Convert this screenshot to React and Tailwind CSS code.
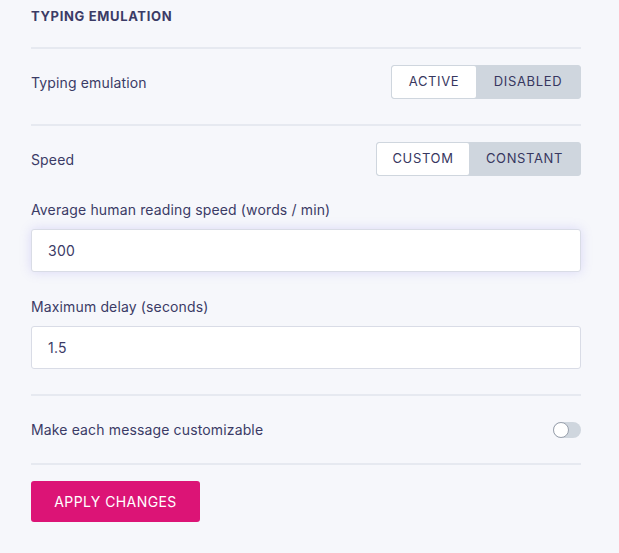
import { useState } from 'react';

function Segmented({ options, value, onChange, widths }) {
  return (
    <div className="flex h-[34px] rounded-[3px] border border-[#cfd6de] bg-[#cfd6de] overflow-hidden">
      {options.map((opt, i) => (
        <button
          key={opt}
          onClick={() => onChange(opt)}
          className={`${widths[i]} h-full text-[13px] tracking-[0.05em] text-[#37375f] ${
            value === opt ? 'bg-white rounded-[2px]' : 'bg-[#cfd6de]'
          }`}
        >
          {opt}
        </button>
      ))}
    </div>
  );
}

export default function App() {
  const [typing, setTyping] = useState('ACTIVE');
  const [speed, setSpeed] = useState('CUSTOM');
  const [wpm, setWpm] = useState('300');
  const [delay, setDelay] = useState('1.5');
  const [custom, setCustom] = useState(false);

  return (
    <div className="min-h-screen bg-[#f6f7fb] text-[#3b3b66] font-['Inter',sans-serif]">
      <div className="w-[550px] ml-[31px]">
        {/* HEADER */}
        <h2 className="pt-[8px] h-[47px] text-[13px] font-bold uppercase leading-4 tracking-[0.05em] text-[#3b3b66]">
          Typing emulation
        </h2>
        <div className="h-[2px] bg-[#e6e9f0]" />

        {/* TYPING EMULATION */}
        <div className="flex items-center justify-between pt-4 pb-[25px]">
          <span className="text-[14px] tracking-[0.01em]">Typing emulation</span>
          <Segmented
            options={['ACTIVE', 'DISABLED']}
            value={typing}
            onChange={setTyping}
            widths={['w-[84px]', 'w-[104px]']}
          />
        </div>
        <div className="h-[2px] bg-[#e6e9f0]" />

        {/* SPEED */}
        <div className="flex items-center justify-between pt-4">
          <span className="text-[14px] tracking-[0.01em]">Speed</span>
          <Segmented
            options={['CUSTOM', 'CONSTANT']}
            value={speed}
            onChange={setSpeed}
            widths={['w-[92px]', 'w-[111px]']}
          />
        </div>

        <label className="block mt-[26px] text-[14px] tracking-[0.01em] leading-4">
          Average human reading speed (words / min)
        </label>
        <input
          value={wpm}
          onChange={(e) => setWpm(e.target.value)}
          className="mt-[11px] w-full h-[43px] px-4 text-[14px] tracking-[0.02em] bg-white rounded-[3px] border border-[#d9dce6] shadow-[0_0_12px_rgba(120,110,230,0.22)] outline-none"
        />

        <label className="block mt-[27px] text-[14px] tracking-[0.01em] leading-4">Maximum delay (seconds)</label>
        <input
          value={delay}
          onChange={(e) => setDelay(e.target.value)}
          className="mt-[11px] w-full h-[43px] px-4 text-[14px] tracking-[0.02em] bg-white rounded-[3px] border border-[#d9dce6] outline-none"
        />

        <div className="mt-[25px] h-[2px] bg-[#e6e9f0]" />

        {/* CUSTOMIZABLE */}
        <div className="flex items-center justify-between h-[67px]">
          <span className="text-[14px] tracking-[0.01em]">Make each message customizable</span>
          <button
            onClick={() => setCustom(!custom)}
            className={`relative w-[28px] h-[16px] rounded-full ${custom ? 'bg-[#dc1476]' : 'bg-[#cfd6de]'}`}
          >
            <span
              className={`absolute top-0 w-[16px] h-[16px] rounded-full bg-white border border-[#9aa1ad] ${
                custom ? 'left-[12px]' : 'left-0'
              }`}
            />
          </button>
        </div>
        <div className="h-[2px] bg-[#e6e9f0]" />

        <button className="mt-4 w-[169px] h-[41px] rounded-[3px] bg-[#dc1476] text-white text-[14px] tracking-[0.03em]">
          APPLY CHANGES
        </button>
      </div>
    </div>
  );
}
